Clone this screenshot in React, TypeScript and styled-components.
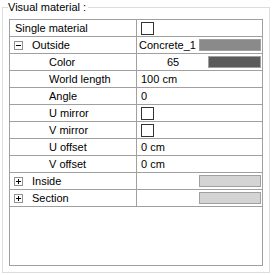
import React from 'react';
import styled, {createGlobalStyle} from 'styled-components';

const GlobalStyle = createGlobalStyle`
    html, body {
        margin: 0;
        padding: 0;
        background: #ffffff;
    }
    body {
        font-family: 'Liberation Sans', Arial, sans-serif;
        font-size: 11px;
        color: #000;
    }
`;

const GroupBox = styled.fieldset`
    box-sizing: border-box;
    width: 268px;
    height: 273px;
    margin: 0 0 0 2px;
    padding: 5px 6px 6px 6px;
    border: 1px solid #dcdcdc;
    min-width: 0;
`;

const Legend = styled.legend`
    margin-left: -1px;
    padding: 0 2px 0 0;
    line-height: 14px;
    height: 14px;
    font-size: 11px;
`;

const Grid = styled.div`
    box-sizing: border-box;
    width: 254px;
    height: 247px;
    border: 1px solid #a0a0a0;
    background: #fff;
    display: flex;
    flex-direction: column;
`;

const Row = styled.div`
    box-sizing: border-box;
    display: flex;
    height: 17px;
    border-bottom: 1px solid #a0a0a0;
    flex-shrink: 0;
`;

const Label = styled.div<{ $indent: number }>`
    box-sizing: border-box;
    width: 127px;
    border-right: 1px solid #a0a0a0;
    display: flex;
    align-items: center;
    padding-left: ${p => p.$indent}px;
    line-height: 16px;
    white-space: nowrap;
`;

const Value = styled.div<{ $pad?: number }>`
    flex: 1;
    display: flex;
    align-items: center;
    padding-left: ${p => p.$pad ?? 4}px;
    line-height: 16px;
    white-space: nowrap;
`;

const Expander = styled.span`
    box-sizing: border-box;
    width: 9px;
    height: 9px;
    border: 1px solid #919191;
    margin-right: 9px;
    position: relative;
    flex-shrink: 0;

    &::before {
        content: '';
        position: absolute;
        left: 1px;
        top: 3px;
        width: 5px;
        height: 1px;
        background: #000;
    }
`;

const PlusExpander = styled(Expander)`
    &::after {
        content: '';
        position: absolute;
        left: 3px;
        top: 1px;
        width: 1px;
        height: 5px;
        background: #000;
    }
`;

const CheckBox = styled.span`
    box-sizing: border-box;
    width: 13px;
    height: 13px;
    border: 1px solid #333;
    background: #fff;
`;

const Swatch = styled.span<{ $color: string; $width: number }>`
    box-sizing: border-box;
    width: ${p => p.$width}px;
    height: 12px;
    margin-left: auto;
    margin-right: 1px;
    background: ${p => p.$color};
    border: 1px solid #a0a0a0;
`;

const Num = styled.span`
    margin-left: auto;
    margin-right: 3px;
`;

const Filler = styled.div`
    flex: 1;
`;

export default function App() {
    return (
        <>
            <GlobalStyle/>
            <GroupBox>
                <Legend>Visual material :</Legend>
                <Grid>
                    <Row>
                        <Label $indent={5}>Single material</Label>
                        <Value><CheckBox/></Value>
                    </Row>
                    <Row>
                        <Label $indent={4}><Expander/>Outside</Label>
                        <Value $pad={2}>Concrete_1<Swatch $color="#8a8a8a" $width={62}/></Value>
                    </Row>
                    <Row>
                        <Label $indent={39}>Color</Label>
                        <Value><Num>65</Num><Swatch $color="#5b5b5b" $width={53}/></Value>
                    </Row>
                    <Row>
                        <Label $indent={39}>World length</Label>
                        <Value>100 cm</Value>
                    </Row>
                    <Row>
                        <Label $indent={39}>Angle</Label>
                        <Value>0</Value>
                    </Row>
                    <Row>
                        <Label $indent={39}>U mirror</Label>
                        <Value><CheckBox/></Value>
                    </Row>
                    <Row>
                        <Label $indent={39}>V mirror</Label>
                        <Value><CheckBox/></Value>
                    </Row>
                    <Row>
                        <Label $indent={39}>U offset</Label>
                        <Value>0 cm</Value>
                    </Row>
                    <Row>
                        <Label $indent={39}>V offset</Label>
                        <Value>0 cm</Value>
                    </Row>
                    <Row>
                        <Label $indent={4}><PlusExpander/>Inside</Label>
                        <Value><Swatch $color="#d4d4d4" $width={62}/></Value>
                    </Row>
                    <Row>
                        <Label $indent={4}><PlusExpander/>Section</Label>
                        <Value><Swatch $color="#d4d4d4" $width={62}/></Value>
                    </Row>
                    <Filler/>
                </Grid>
            </GroupBox>
        </>
    );
}
